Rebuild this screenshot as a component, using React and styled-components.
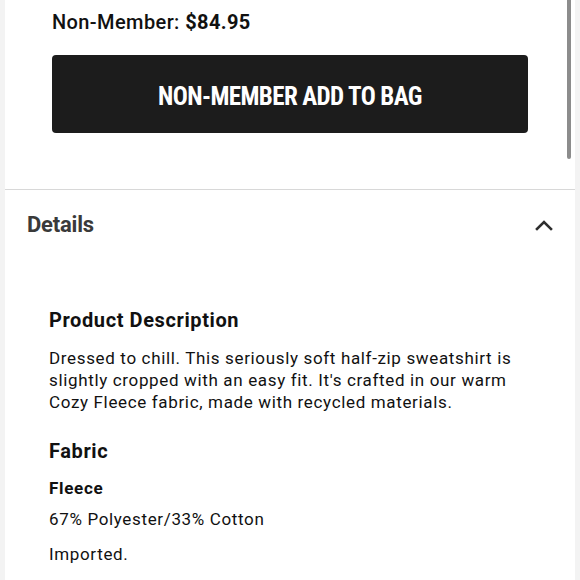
import React from "react";
import styled, { createGlobalStyle } from "styled-components";

const GlobalStyle = createGlobalStyle`
  html, body {
    margin: 0;
    padding: 0;
    background: #ffffff;
  }
  body {
    font-family: Roboto, "Liberation Sans", sans-serif;
    color: #111111;
  }
`;

export default function App() {
  return (
    <>
      <GlobalStyle />
      <Page>
        <Gutter />
        <Main>
          <Scrollbar />
          <BuySection>
            <Price>
              Non-Member: <strong>$84.95</strong>
            </Price>
            <AddButton type="button">Non-Member Add to Bag</AddButton>
          </BuySection>

          <AccordionHeader>
            <AccordionTitle>Details</AccordionTitle>
            <svg width="18" height="12" viewBox="0 0 18 12" fill="none">
              <path
                d="M2 10 L9 3 L16 10"
                stroke="#2e2e2e"
                strokeWidth="2.6"
                strokeLinecap="square"
              />
            </svg>
          </AccordionHeader>

          <AccordionBody>
            <Heading>Product Description</Heading>
            <Text>
              Dressed to chill. This seriously soft half-zip sweatshirt is
              slightly cropped with an easy fit. It's crafted in our warm Cozy
              Fleece fabric, made with recycled materials.
            </Text>
            <Heading $gap={26}>Fabric</Heading>
            <SubHeading>Fleece</SubHeading>
            <Text $gap={9}>67% Polyester/33% Cotton</Text>
            <Text $gap={13}>Imported.</Text>
          </AccordionBody>
        </Main>
        <Gutter />
      </Page>
    </>
  );
}

const Page = styled.div`
  display: flex;
  width: 580px;
  height: 580px;
  overflow: hidden;
`;

const Gutter = styled.div`
  width: 5px;
  flex-shrink: 0;
  background: #f3f3f3;
`;

const Main = styled.div`
  position: relative;
  flex: 1;
  background: #ffffff;
`;

const Scrollbar = styled.div`
  position: absolute;
  top: 0;
  right: 4px;
  width: 4px;
  height: 159px;
  border-radius: 0 0 2px 2px;
  background: #8c8c8c;
`;

const BuySection = styled.div`
  padding: 10px 47px 56px;
  border-bottom: 1px solid #d8d8d8;
`;

const Price = styled.div`
  font-size: 20px;
  line-height: 24px;
  font-weight: 500;
  letter-spacing: 0.4px;
  strong {
    font-weight: 700;
  }
`;

const AddButton = styled.button`
  display: block;
  width: 100%;
  height: 78px;
  margin-top: 21px;
  padding: 4px 0 0;
  border: none;
  border-radius: 4px;
  background: #1c1c1c;
  color: #ffffff;
  font-family: "Roboto Condensed", "Liberation Sans Narrow", "DejaVu Sans Condensed", Roboto, sans-serif;
  font-size: 25px;
  font-weight: 700;
  letter-spacing: -0.6px;
  text-transform: uppercase;
`;

const AccordionHeader = styled.div`
  display: flex;
  align-items: center;
  justify-content: space-between;
  padding: 22px 22px 22px 22px;
`;

const AccordionTitle = styled.h2`
  margin: 0;
  font-size: 22px;
  line-height: 26px;
  font-weight: 700;
  color: #3a3a3a;
  letter-spacing: -0.2px;
`;

const AccordionBody = styled.div`
  padding: 48px 44px 0;
`;

const Heading = styled.h3`
  margin: ${(p) => p.$gap || 0}px 0 0;
  font-size: 20px;
  line-height: 24px;
  font-weight: 700;
  letter-spacing: 0.6px;
`;

const SubHeading = styled.h4`
  margin: 14px 0 0;
  font-size: 17px;
  line-height: 22px;
  font-weight: 700;
  letter-spacing: 0.7px;
`;

const Text = styled.p`
  margin: ${(p) => p.$gap ?? 15}px 0 0;
  font-size: 17px;
  line-height: 22px;
  font-weight: 400;
  letter-spacing: 0.65px;
`;
